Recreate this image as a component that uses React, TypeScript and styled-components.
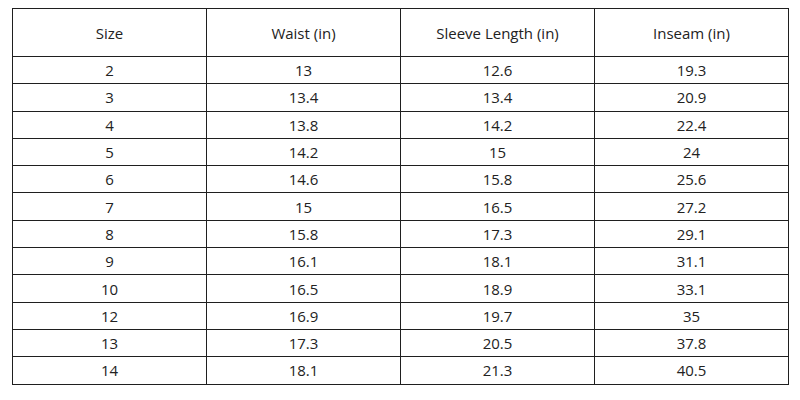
import styled, { createGlobalStyle } from "styled-components";

const GlobalStyle = createGlobalStyle`
  body {
    margin: 0;
    background: #ffffff;
    font-family: "Open Sans", "Noto Sans", sans-serif;
    color: #222222;
  }
`;

const Page = styled.div`
  padding: 8px 11px 0 12px;
`;

const Table = styled.table`
  width: 777px;
  border-collapse: collapse;
  table-layout: fixed;
  font-size: 15px;
`;

const HeadCell = styled.th`
  height: 47px;
  padding: 0;
  font-weight: 400;
  text-align: center;
  border: 1px solid #1f1f1f;
`;

const Cell = styled.td`
  height: 26.3px;
  padding: 0;
  text-align: center;
  border: 1px solid #1f1f1f;
`;

const columns = ["Size", "Waist (in)", "Sleeve Length (in)", "Inseam (in)"];

const rows: string[][] = [
  ["2", "13", "12.6", "19.3"],
  ["3", "13.4", "13.4", "20.9"],
  ["4", "13.8", "14.2", "22.4"],
  ["5", "14.2", "15", "24"],
  ["6", "14.6", "15.8", "25.6"],
  ["7", "15", "16.5", "27.2"],
  ["8", "15.8", "17.3", "29.1"],
  ["9", "16.1", "18.1", "31.1"],
  ["10", "16.5", "18.9", "33.1"],
  ["12", "16.9", "19.7", "35"],
  ["13", "17.3", "20.5", "37.8"],
  ["14", "18.1", "21.3", "40.5"],
];

const App = () => {
  return (
    <Page>
      <GlobalStyle />
      <Table>
        <thead>
          <tr>
            {columns.map((c) => (
              <HeadCell key={c}>{c}</HeadCell>
            ))}
          </tr>
        </thead>
        <tbody>
          {rows.map((r) => (
            <tr key={r[0]}>
              {r.map((v, i) => (
                <Cell key={i}>{v}</Cell>
              ))}
            </tr>
          ))}
        </tbody>
      </Table>
    </Page>
  );
};

export default App;
